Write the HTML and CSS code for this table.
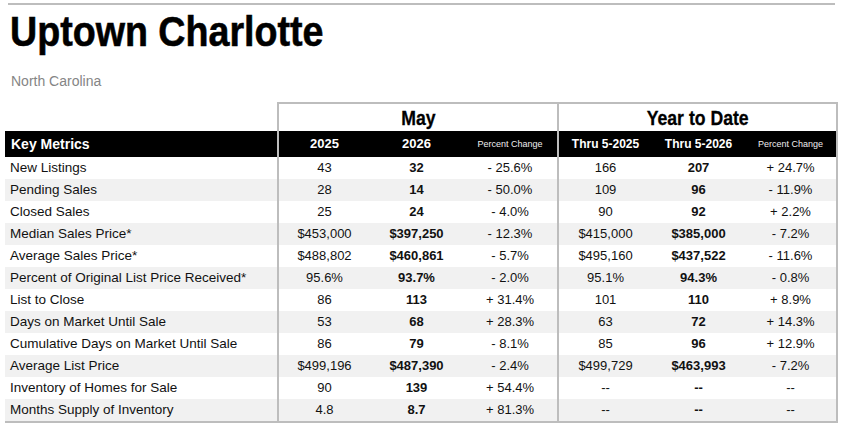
FILE: index.html
```html
<!DOCTYPE html>
<html lang="en">
<head>
    <meta charset="UTF-8">
    <meta name="viewport" content="width=device-width, initial-scale=1.0">
    <title>Uptown Charlotte</title>
    <link rel="stylesheet" href="styles.css">
</head>
<body>
    <div class="top-rule"></div>
    <h1 class="title"><span>Uptown Charlotte</span></h1>
    <p class="region">North Carolina</p>

    <table class="metrics">
        <colgroup>
            <col class="col-label">
            <col class="col-a">
            <col class="col-b">
            <col class="col-c">
            <col class="col-d">
            <col class="col-e">
            <col class="col-f">
        </colgroup>
        <thead>
            <tr class="period-row">
                <th class="blank"></th>
                <th colspan="3" class="period"><span>May</span></th>
                <th colspan="3" class="period last"><span>Year to Date</span></th>
            </tr>
            <tr class="head-row">
                <th class="label">Key Metrics</th>
                <th class="start">2025</th>
                <th>2026</th>
                <th class="pct">Percent Change</th>
                <th class="start thru">Thru 5-2025</th>
                <th class="thru">Thru 5-2026</th>
                <th class="pct last">Percent Change</th>
            </tr>
        </thead>
        <tbody>
            <tr><td class="label">New Listings</td><td class="start">43</td><td class="bold">32</td><td>- 25.6%</td><td class="start">166</td><td class="bold">207</td><td class="last">+ 24.7%</td></tr>
            <tr><td class="label">Pending Sales</td><td class="start">28</td><td class="bold">14</td><td>- 50.0%</td><td class="start">109</td><td class="bold">96</td><td class="last">- 11.9%</td></tr>
            <tr><td class="label">Closed Sales</td><td class="start">25</td><td class="bold">24</td><td>- 4.0%</td><td class="start">90</td><td class="bold">92</td><td class="last">+ 2.2%</td></tr>
            <tr><td class="label">Median Sales Price*</td><td class="start">$453,000</td><td class="bold">$397,250</td><td>- 12.3%</td><td class="start">$415,000</td><td class="bold">$385,000</td><td class="last">- 7.2%</td></tr>
            <tr><td class="label">Average Sales Price*</td><td class="start">$488,802</td><td class="bold">$460,861</td><td>- 5.7%</td><td class="start">$495,160</td><td class="bold">$437,522</td><td class="last">- 11.6%</td></tr>
            <tr><td class="label">Percent of Original List Price Received*</td><td class="start">95.6%</td><td class="bold">93.7%</td><td>- 2.0%</td><td class="start">95.1%</td><td class="bold">94.3%</td><td class="last">- 0.8%</td></tr>
            <tr><td class="label">List to Close</td><td class="start">86</td><td class="bold">113</td><td>+ 31.4%</td><td class="start">101</td><td class="bold">110</td><td class="last">+ 8.9%</td></tr>
            <tr><td class="label">Days on Market Until Sale</td><td class="start">53</td><td class="bold">68</td><td>+ 28.3%</td><td class="start">63</td><td class="bold">72</td><td class="last">+ 14.3%</td></tr>
            <tr><td class="label">Cumulative Days on Market Until Sale</td><td class="start">86</td><td class="bold">79</td><td>- 8.1%</td><td class="start">85</td><td class="bold">96</td><td class="last">+ 12.9%</td></tr>
            <tr><td class="label">Average List Price</td><td class="start">$499,196</td><td class="bold">$487,390</td><td>- 2.4%</td><td class="start">$499,729</td><td class="bold">$463,993</td><td class="last">- 7.2%</td></tr>
            <tr><td class="label">Inventory of Homes for Sale</td><td class="start">90</td><td class="bold">139</td><td>+ 54.4%</td><td class="start">--</td><td class="bold">--</td><td class="last">--</td></tr>
            <tr><td class="label">Months Supply of Inventory</td><td class="start">4.8</td><td class="bold">8.7</td><td>+ 81.3%</td><td class="start">--</td><td class="bold">--</td><td class="last">--</td></tr>
        </tbody>
    </table>
</body>
</html>
```

FILE: styles.css
```css
body {
    margin: 0;
    font-family: "Liberation Sans", Arial, sans-serif;
    color: #111;
    background: #fff;
}

.top-rule {
    height: 2px;
    margin: 3px 6px 0 8px;
    background-color: #bdbdbd;
}

.title {
    margin: 1px 0 0 10px;
    font-size: 43px;
    line-height: 50px;
    font-weight: bold;
    color: #000;
}

.title span {
    display: inline-block;
    transform: scaleX(0.875);
    transform-origin: left center;
    -webkit-text-stroke: 0.6px #000;
}

.region {
    margin: 16px 0 0 11px;
    font-size: 14px;
    line-height: 18px;
    color: #858585;
}

.metrics {
    margin: 12px 0 0 5px;
    width: 833px;
    table-layout: fixed;
    border-collapse: separate;
    border-spacing: 0;
}

.col-label { width: 272px; }
.col-a { width: 93px; }
.col-b { width: 93px; }
.col-c { width: 94px; }
.col-d { width: 95px; }
.col-e { width: 93px; }
.col-f { width: 93px; }

.metrics th,
.metrics td {
    padding: 0;
    text-align: center;
    white-space: nowrap;
}

.period-row th {
    height: 26px;
    padding-top: 1px;
    font-size: 21px;
    line-height: 26px;
    font-weight: bold;
    color: #000;
}

.period {
    border-top: 2px solid #bdbdbd;
    border-left: 2px solid #bdbdbd;
}

.period.last {
    border-right: 2px solid #bdbdbd;
}

.period span {
    display: inline-block;
    transform: scaleX(0.84);
    -webkit-text-stroke: 0.3px #000;
}

.head-row th {
    height: 26px;
    line-height: 26px;
    background-color: #000;
    color: #fff;
    font-size: 13px;
    font-weight: bold;
}

.head-row th.start {
    border-left: 2px solid #bdbdbd;
}

.head-row th.last {
    border-right: 2px solid #bdbdbd;
}

.head-row th.label {
    text-align: left;
    padding-left: 6px;
    font-size: 14px;
}

.head-row th.thru {
    font-size: 12px;
}

.head-row th.pct {
    font-size: 9px;
    font-weight: normal;
    color: #eee;
}

.metrics td {
    height: 22px;
    line-height: 22px;
    font-size: 13px;
}

.metrics td.label {
    text-align: left;
    padding-left: 5px;
    font-size: 13.5px;
}

.metrics td.start {
    border-left: 2px solid #bdbdbd;
}

.metrics td.last {
    border-right: 2px solid #bdbdbd;
}

.metrics td.bold {
    font-weight: bold;
}

.metrics tbody tr:nth-child(even) td {
    background-color: #f1f1f1;
}

.metrics tbody tr:last-child td {
    border-bottom: 2px solid #bdbdbd;
}
```
